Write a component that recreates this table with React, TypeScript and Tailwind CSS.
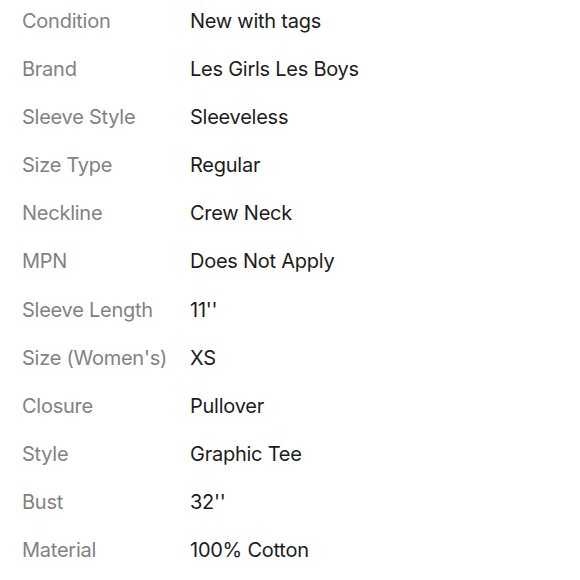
const specs: [string, string][] = [
  ["Condition", "New with tags"],
  ["Brand", "Les Girls Les Boys"],
  ["Sleeve Style", "Sleeveless"],
  ["Size Type", "Regular"],
  ["Neckline", "Crew Neck"],
  ["MPN", "Does Not Apply"],
  ["Sleeve Length", "11''"],
  ["Size (Women's)", "XS"],
  ["Closure", "Pullover"],
  ["Style", "Graphic Tee"],
  ["Bust", "32''"],
  ["Material", "100% Cotton"],
];

export default function App() {
  return (
    <main className="h-[580px] w-[580px] overflow-hidden bg-white font-['Inter',sans-serif] text-[20px] tracking-[-0.25px]">
      <div className="flex flex-col gap-[6.1px] pl-[22px]">
        {specs.map(([label, value]) => (
          <div key={label} className="flex leading-[42px]">
            <span className="w-[168px] shrink-0 text-[#828282]">{label}</span>
            <span className="text-[#1c1c1c]">{value}</span>
          </div>
        ))}
      </div>
    </main>
  );
}
